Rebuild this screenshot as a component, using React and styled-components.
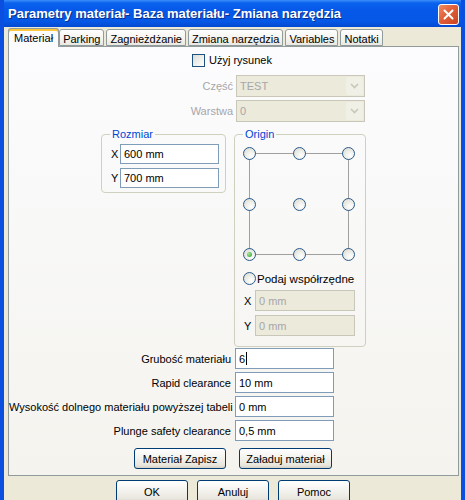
import React from 'react';
import styled, { createGlobalStyle } from 'styled-components';

const GlobalStyle = createGlobalStyle`
  html, body {
    margin: 0;
    padding: 0;
    background: #ece9d8;
  }
  body {
    font-family: "Liberation Sans", Arial, sans-serif;
    font-size: 11px;
    color: #000;
  }
`;

const Window = styled.div`
  width: 465px;
  height: 500px;
  overflow: hidden;
  display: flex;
  flex-direction: column;
  background: #ece9d8;
  box-sizing: border-box;
  border-left: 4px solid #0b4fe0;
  border-right: 4px solid #0b4fe0;
`;

const TitleBar = styled.div`
  height: 27px;
  flex: none;
  margin: 0 -4px;
  padding: 0 6px 0 8px;
  display: flex;
  align-items: center;
  justify-content: space-between;
  background: linear-gradient(#3d8ef9 0, #0a62ee 3px, #0658e8 40%, #0557e6 80%, #0349d0 100%);
`;

const Title = styled.span`
  color: #fff;
  font-weight: bold;
  font-size: 13px;
  text-shadow: 1px 1px 0 #0a2e8a;
`;

const CloseButton = styled.div`
  width: 19px;
  height: 19px;
  border: 1px solid #fff;
  border-radius: 3px;
  background: linear-gradient(135deg, #f08a62 0%, #e0603a 45%, #c94420 100%);
  display: flex;
  align-items: center;
  justify-content: center;
  margin-top: 1px;
`;

const Body = styled.div`
  flex: 1;
  padding: 1px 2px 0 4px;
  display: flex;
  flex-direction: column;
`;

const Tabs = styled.div`
  display: flex;
  align-items: flex-end;
  height: 18px;
  position: relative;
  z-index: 1;
`;

const Tab = styled.div`
  box-sizing: border-box;
  height: ${({ active }) => (active ? '19px' : '17px')};
  margin-bottom: ${({ active }) => (active ? '-1px' : '0')};
  padding: ${({ active }) => (active ? '2px 5px 0' : '2px 3px 0')};
  margin-right: ${({ active }) => (active ? '0' : '2px')};
  border: 1px solid #919b9c;
  border-bottom: ${({ active }) => (active ? 'none' : '1px solid #919b9c')};
  border-radius: 3px 3px 0 0;
  background: ${({ active }) =>
    active ? '#fcfcfe' : 'linear-gradient(#fefefe, #f4f3ee 60%, #e9e8e2)'};
  box-shadow: ${({ active }) => (active ? 'inset 0 2px 0 #ffc83c, inset 0 1px 0 #e68b2c' : 'none')};
  white-space: nowrap;
  line-height: 14px;
`;

const Panel = styled.div`
  box-sizing: border-box;
  height: 430px;
  border: 1px solid #919b9c;
  background: linear-gradient(#fcfcfe, #f4f3ee);
  display: flex;
  flex-direction: column;
`;

const CheckRow = styled.label`
  display: flex;
  align-items: center;
  gap: 4px;
  padding: 6px 0 0 183px;
  height: 14px;
`;

const CheckBox = styled.span`
  width: 11px;
  height: 11px;
  border: 1px solid #1c5180;
  background: linear-gradient(135deg, #dcdcd7, #fff);
`;

const SelectGrid = styled.div`
  display: grid;
  grid-template-columns: 224px 129px;
  column-gap: 3px;
  row-gap: 3px;
  margin-top: 8px;
  align-items: center;
`;

const Label = styled.span`
  text-align: right;
  color: ${({ disabled }) => (disabled ? '#a7a6aa' : '#000')};
  white-space: nowrap;
`;

const Select = styled.div`
  box-sizing: border-box;
  height: 22px;
  border: 1px solid #c9c7ba;
  background: #ebeadb;
  color: #a7a6aa;
  display: flex;
  align-items: center;
  justify-content: space-between;
  padding: 0 1px 0 3px;
`;

const DropButton = styled.span`
  box-sizing: border-box;
  width: 17px;
  height: 18px;
  background: #f1f0e6;
  border-radius: 2px;
  display: flex;
  align-items: center;
  justify-content: center;
`;

const GroupsRow = styled.div`
  display: flex;
  align-items: flex-start;
  gap: 8px;
  margin: 6px 0 0 92px;
`;

const Group = styled.fieldset`
  box-sizing: border-box;
  width: ${({ w }) => w}px;
  height: ${({ h }) => h}px;
  margin: 0;
  padding: 0 6px;
  border: 1px solid #d0d0bf;
  border-radius: 4px;
  display: flex;
  flex-direction: column;
`;

const Legend = styled.legend`
  color: #0046d5;
  padding: 0 2px;
  margin-left: 2px;
  line-height: 12px;
`;

const FieldRow = styled.div`
  display: flex;
  align-items: center;
  margin-top: ${({ top }) => top}px;
`;

const AxisLabel = styled.span`
  width: ${({ w }) => w || 12}px;
  padding-left: 3px;
  box-sizing: border-box;
`;

const Input = styled.div`
  box-sizing: border-box;
  width: ${({ w }) => w || 99}px;
  height: ${({ h }) => h || 21}px;
  border: 1px solid ${({ disabled }) => (disabled ? '#c9c7ba' : '#7f9db9')};
  background: ${({ disabled }) => (disabled ? '#ebeadb' : '#fff')};
  color: ${({ disabled }) => (disabled ? '#a7a6aa' : '#000')};
  display: flex;
  align-items: center;
  padding-left: 3px;
  white-space: nowrap;
`;

const Caret = styled.span`
  width: 1px;
  height: 13px;
  background: #000;
  margin-left: 1px;
`;

const OriginGrid = styled.div`
  position: relative;
  width: 112px;
  height: 114px;
  margin: 7px 0 0 2px;
  display: grid;
  grid-template-columns: repeat(3, 13px);
  grid-template-rows: repeat(3, 13px);
  justify-content: space-between;
  align-content: space-between;

  &::before {
    content: '';
    position: absolute;
    inset: 6px;
    border: 1px solid #a0a0a0;
  }
`;

const Radio = styled.span`
  position: relative;
  box-sizing: border-box;
  width: 13px;
  height: 13px;
  border-radius: 50%;
  border: 1px solid #2a5a8a;
  background: radial-gradient(circle at 65% 70%, #ffffff 0%, #eaeae4 55%, #d6d5cc 100%);
  display: flex;
  align-items: center;
  justify-content: center;

  &::after {
    content: '';
    display: ${({ checked }) => (checked ? 'block' : 'none')};
    width: 5px;
    height: 5px;
    border-radius: 50%;
    background: radial-gradient(circle at 35% 35%, #a8e4a0, #21a121);
  }
`;

const RadioLine = styled.div`
  display: flex;
  align-items: center;
  gap: 1px;
  margin: 11px 0 0 2px;
  font-size: 11.5px;
`;

const FormGrid = styled.div`
  display: grid;
  grid-template-columns: 222px 99px;
  column-gap: 4px;
  row-gap: 3px;
  margin-top: 1px;
  align-items: center;
`;

const ButtonsRow = styled.div`
  display: flex;
  gap: ${({ gap }) => gap}px;
  padding-left: ${({ left }) => left}px;
  margin-top: ${({ top }) => top}px;
`;

const Button = styled.div`
  box-sizing: border-box;
  width: ${({ w }) => w}px;
  height: ${({ h }) => h || 21}px;
  border: 1px solid #003c74;
  border-radius: 3px;
  background: linear-gradient(#ffffff, #f2f1ec 50%, #e8e6dd 85%, #d6d0c5);
  display: flex;
  align-items: center;
  justify-content: center;
  white-space: nowrap;
`;

const Footer = styled.div`
  display: flex;
  gap: 9px;
  padding-left: 108px;
  margin-top: 4px;
`;

function Chevron() {
  return (
    <svg width="9" height="6" viewBox="0 0 9 6">
      <path d="M1 1 L4.5 4.5 L8 1" fill="none" stroke="#c9c7ba" strokeWidth="1.6" />
    </svg>
  );
}

function CloseIcon() {
  return (
    <svg width="11" height="11" viewBox="0 0 11 11">
      <path d="M1.5 1.5 L9.5 9.5 M9.5 1.5 L1.5 9.5" stroke="#fff" strokeWidth="2" strokeLinecap="round" />
    </svg>
  );
}

const tabs = ['Materiał', 'Parking', 'Zagnieżdżanie', 'Zmiana narzędzia', 'Variables', 'Notatki'];

const formRows = [
  { label: 'Grubość materiału', value: '6', caret: true },
  { label: 'Rapid clearance', value: '10 mm' },
  { label: 'Wysokość dolnego materiału powyższej tabeli', value: '0 mm' },
  { label: 'Plunge safety clearance', value: '0,5 mm' }
];

export default function App() {
  return (
    <Window>
      <GlobalStyle />
      <TitleBar>
        <Title>Parametry materiał- Baza materiału- Zmiana narzędzia</Title>
        <CloseButton>
          <CloseIcon />
        </CloseButton>
      </TitleBar>
      <Body>
        <Tabs>
          {tabs.map((t, i) => (
            <Tab key={t} active={i === 0}>
              {t}
            </Tab>
          ))}
        </Tabs>
        <Panel>
          <CheckRow>
            <CheckBox />
            <span>Użyj rysunek</span>
          </CheckRow>
          <SelectGrid>
            <Label disabled>Część</Label>
            <Select>
              TEST
              <DropButton>
                <Chevron />
              </DropButton>
            </Select>
            <Label disabled>Warstwa</Label>
            <Select>
              0
              <DropButton>
                <Chevron />
              </DropButton>
            </Select>
          </SelectGrid>
          <GroupsRow>
            <Group w={124} h={65}>
              <Legend>Rozmiar</Legend>
              <FieldRow top={4}>
                <AxisLabel>X</AxisLabel>
                <Input h={20}>600 mm</Input>
              </FieldRow>
              <FieldRow top={4}>
                <AxisLabel>Y</AxisLabel>
                <Input h={20}>700 mm</Input>
              </FieldRow>
            </Group>
            <Group w={132} h={219}>
              <Legend>Origin</Legend>
              <OriginGrid>
                <Radio />
                <Radio />
                <Radio />
                <Radio />
                <Radio />
                <Radio />
                <Radio checked />
                <Radio />
                <Radio />
              </OriginGrid>
              <RadioLine>
                <Radio />
                <span>Podaj współrzędne</span>
              </RadioLine>
              <FieldRow top={5}>
                <AxisLabel w={14}>X</AxisLabel>
                <Input disabled w={100}>0 mm</Input>
              </FieldRow>
              <FieldRow top={4}>
                <AxisLabel w={14}>Y</AxisLabel>
                <Input disabled w={100}>0 mm</Input>
              </FieldRow>
            </Group>
          </GroupsRow>
          <FormGrid>
            {formRows.map((r) => (
              <React.Fragment key={r.label}>
                <Label>{r.label}</Label>
                <Input>
                  {r.value}
                  {r.caret && <Caret />}
                </Input>
              </React.Fragment>
            ))}
          </FormGrid>
          <ButtonsRow gap={13} left={125} top={7}>
            <Button w={92}>Materiał Zapisz</Button>
            <Button w={93}>Załaduj materiał</Button>
          </ButtonsRow>
        </Panel>
        <Footer>
          <Button w={72} h={23}>OK</Button>
          <Button w={72} h={23}>Anuluj</Button>
          <Button w={72} h={23}>Pomoc</Button>
        </Footer>
      </Body>
    </Window>
  );
}
